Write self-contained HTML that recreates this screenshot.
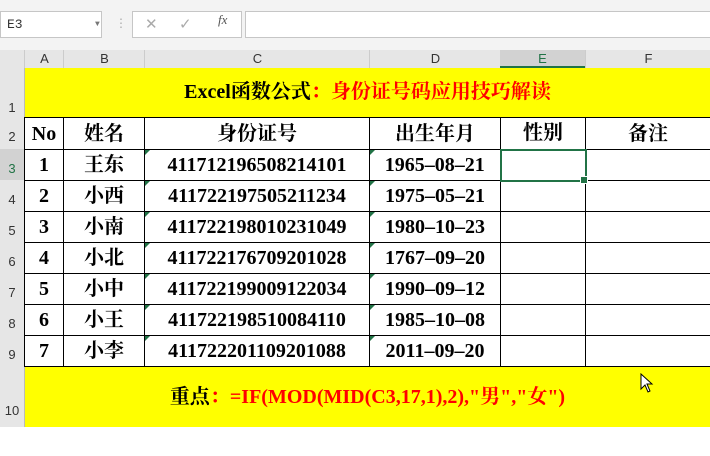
<html><head><style>
td{border:1px solid #000;padding:0;line-height:20px;overflow:hidden}
</style></head><body style="margin:0;width:710px;height:427px;overflow:hidden;background:#fff;font-family:'Liberation Serif','Noto Serif CJK SC',serif;position:relative">
<div style="position:absolute;left:0;top:0;width:710px;height:50px;background:#f3f3f3"></div>
<div style="position:absolute;left:0;top:11px;width:100px;height:25px;background:#fff;border:1px solid #c6c6c6;font:13px 'Liberation Mono',monospace;line-height:25px;text-indent:6px;color:#333">E3<span style="position:absolute;left:88px;top:0;font-size:8px;color:#777">▼</span></div>
<div style="position:absolute;left:115px;top:16px;color:#aaa;font-size:12px">⋮</div>
<div style="position:absolute;left:132px;top:11px;width:108px;height:25px;background:#fff;border:1px solid #c6c6c6;color:#aaa;font:15px 'Liberation Sans',sans-serif;line-height:25px"><span style="position:absolute;left:12px">✕</span><span style="position:absolute;left:46px">✓</span><span style="position:absolute;left:85px;font:italic 13px 'Liberation Serif';color:#555">fx</span></div>
<div style="position:absolute;left:245px;top:11px;width:470px;height:25px;background:#fff;border:1px solid #c6c6c6"></div>
<div style="position:absolute;left:0;top:50px;width:710px;height:18px;background:#e6e6e6;border-bottom:1px solid #bbb;font:13px 'Liberation Sans',sans-serif;color:#333;line-height:18px">
<span style="position:absolute;left:24px;width:39px;text-align:center;border-left:1px solid #ccc">A</span>
<span style="position:absolute;left:63px;width:81px;text-align:center;border-left:1px solid #ccc">B</span>
<span style="position:absolute;left:144px;width:225px;text-align:center;border-left:1px solid #ccc">C</span>
<span style="position:absolute;left:369px;width:131px;text-align:center;border-left:1px solid #ccc">D</span>
<span style="position:absolute;left:500px;width:85px;text-align:center;background:#d2d2d2;border-bottom:2px solid #217346;height:16px;color:#217346">E</span>
<span style="position:absolute;left:585px;width:125px;text-align:center;border-left:1px solid #ccc">F</span>
</div>
<div style="position:absolute;left:0;top:68px;width:24px;height:359px;background:#e6e6e6;font:13px 'Liberation Sans',sans-serif;color:#333;border-right:1px solid #bbb">
<div style="position:absolute;top:0;height:49px;width:24px;line-height:80px;text-align:center">1</div>
<div style="position:absolute;top:49px;height:32px;width:24px;line-height:40px;text-align:center">2</div>
<div style="position:absolute;top:81px;height:31px;width:24px;line-height:40px;text-align:center;background:#d2d2d2;color:#217346">3</div>
<div style="position:absolute;top:112px;width:24px;line-height:40px;text-align:center">4</div>
<div style="position:absolute;top:143px;width:24px;line-height:40px;text-align:center">5</div>
<div style="position:absolute;top:174px;width:24px;line-height:40px;text-align:center">6</div>
<div style="position:absolute;top:205px;width:24px;line-height:40px;text-align:center">7</div>
<div style="position:absolute;top:236px;width:24px;line-height:40px;text-align:center">8</div>
<div style="position:absolute;top:267px;width:24px;line-height:40px;text-align:center">9</div>
<div style="position:absolute;top:298px;width:24px;line-height:90px;text-align:center">10</div>
</div>
<div style="position:absolute;left:25px;top:68px;width:685px;height:49px;background:#ff0;text-align:center;line-height:49px;font-weight:bold;font-size:20px">Excel函数公式<span style="color:#f00">：身份证号码应用技巧解读</span></div>
<table style="position:absolute;left:24px;top:117px;border-collapse:collapse;font-weight:bold;font-size:20px;text-align:center;table-layout:fixed;width:686px">
<colgroup><col style="width:39px"><col style="width:81px"><col style="width:225px"><col style="width:131px"><col style="width:85px"><col style="width:125px"></colgroup>
<tr style="height:32px"><td>No</td><td>姓名</td><td>身份证号</td><td>出生年月</td><td>性别</td><td>备注</td></tr>
<tr style="height:31px"><td>1</td><td>王东</td><td>411712196508214101</td><td>1965–08–21</td><td style="border:2px solid #217346"></td><td></td></tr>
<tr style="height:31px"><td>2</td><td>小西</td><td>411722197505211234</td><td>1975–05–21</td><td></td><td></td></tr>
<tr style="height:31px"><td>3</td><td>小南</td><td>411722198010231049</td><td>1980–10–23</td><td></td><td></td></tr>
<tr style="height:31px"><td>4</td><td>小北</td><td>411722176709201028</td><td>1767–09–20</td><td></td><td></td></tr>
<tr style="height:31px"><td>5</td><td>小中</td><td>411722199009122034</td><td>1990–09–12</td><td></td><td></td></tr>
<tr style="height:31px"><td>6</td><td>小王</td><td>411722198510084110</td><td>1985–10–08</td><td></td><td></td></tr>
<tr style="height:31px"><td>7</td><td>小李</td><td>411722201109201088</td><td>2011–09–20</td><td></td><td></td></tr>
</table>
<svg style="position:absolute;left:145px;top:150px" width="240" height="220">
<g fill="#217346">
<path d="M0 0h5L0 5z"/><path d="M225 0h5L225 5z"/>
<path d="M0 31h5L0 36z"/><path d="M225 31h5L225 36z"/>
<path d="M0 62h5L0 67z"/><path d="M225 62h5L225 67z"/>
<path d="M0 93h5L0 98z"/><path d="M225 93h5L225 98z"/>
<path d="M0 124h5L0 129z"/><path d="M225 124h5L225 129z"/>
<path d="M0 155h5L0 160z"/><path d="M225 155h5L225 160z"/>
<path d="M0 186h5L0 191z"/><path d="M225 186h5L225 191z"/>
</g></svg>
<div style="position:absolute;left:25px;top:367px;width:685px;height:60px;background:#ff0;text-align:center;line-height:60px;font-weight:bold;font-size:20px">重点<span style="color:#f00">：=IF(MOD(MID(C3,17,1),2),"男","女")</span></div>
<div style="position:absolute;left:580px;top:176px;width:6px;height:6px;background:#217346;border:1px solid #fff"></div>
<svg style="position:absolute;left:640px;top:373px" width="16" height="22"><path d="M1 1 L1 16 L5 12 L8 19 L10 18 L7 11 L12 11 Z" fill="#fff" stroke="#000"/></svg>
</body></html>
